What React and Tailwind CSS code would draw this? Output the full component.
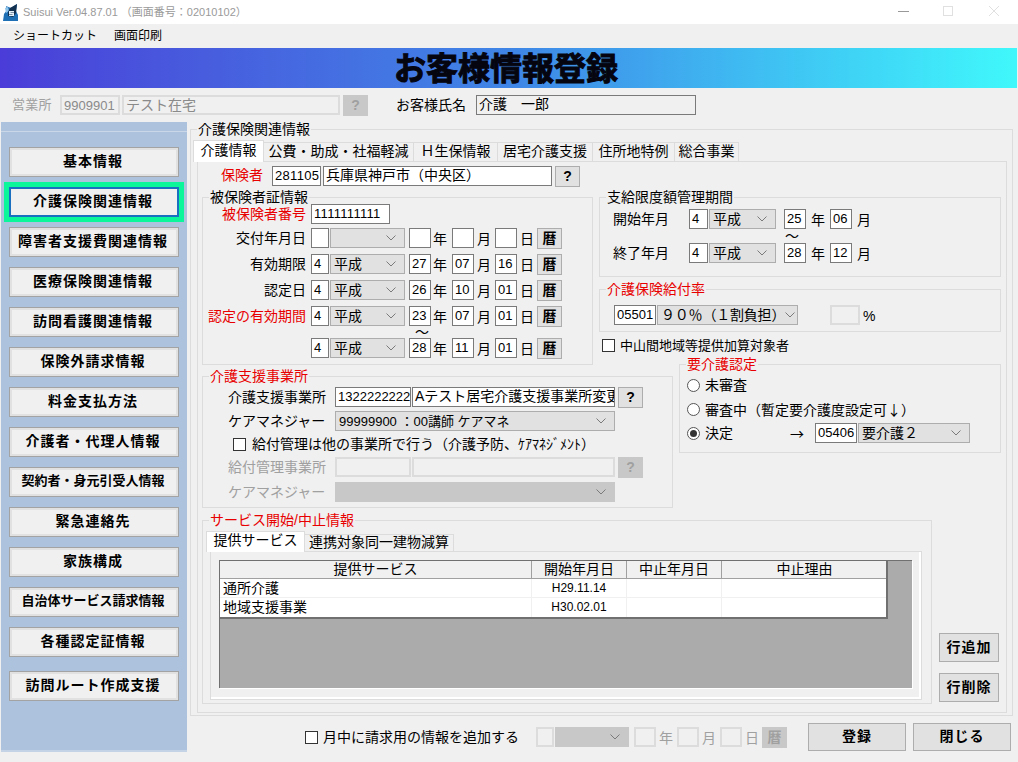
import React from 'react';

const fieldBorder = 'border border-[#7a7a7a]';

const Chevron = () => (
  <svg width="10" height="6" viewBox="0 0 10 6" fill="none" stroke="#7a7a7a" strokeWidth="1" className="shrink-0">
    <path d="M0.5 0.5 L5 5 L9.5 0.5" />
  </svg>
);

// text box, off = disabled look
const Box = ({ className = '', num, off, children }) => (
  <div className={`h-[20px] shrink-0 overflow-hidden whitespace-nowrap pl-[2px] leading-[17px] ${num ? 'text-[13px]' : 'text-[14px]'} ${off ? 'border-2 border-[#dcdcdc] bg-[#f0f0f0]' : `${fieldBorder} bg-white`} ${className}`}>
    {children}
  </div>
);

const Select = ({ className = '', off, children }) => (
  <div className={`flex h-[20px] shrink-0 items-center justify-between overflow-hidden whitespace-nowrap pl-[3px] pr-[8px] text-[14px] border ${off ? 'border-[#c8c8c8] bg-[#c8c8c8]' : 'border-[#adadad] bg-[#e1e1e1]'} ${className}`}>
    <span>{children}</span>
    <Chevron />
  </div>
);

const Btn = ({ className = '', off, children }) => (
  <div className={`flex shrink-0 items-center justify-center font-bold border ${off ? 'border-[#c8c8c8] bg-[#c8c8c8] text-[#a0a0a0]' : 'border-[#adadad] bg-[#e1e1e1]'} ${className}`}>
    {children}
  </div>
);

const Unit = ({ className = '', children }) => (
  <span className={`w-[14px] shrink-0 pt-[3px] text-[14px] leading-[17px] ${className}`}>{children}</span>
);

const Check = ({ className = '' }) => <span className={`h-[13px] w-[13px] shrink-0 border border-[#333333] bg-white ${className}`} />;

const Radio = ({ checked }) => (
  <span className="flex h-[13px] w-[13px] shrink-0 items-center justify-center rounded-full border border-[#555555] bg-white">
    {checked && <span className="h-[7px] w-[7px] rounded-full bg-[#333333]" />}
  </span>
);

const Group = ({ title, red, className = '', children }) => (
  <div className={`relative border border-[#dcdcdc] ${className}`}>
    <span className={`absolute left-[6px] top-[-9px] bg-[#f0f0f0] px-px text-[14px] leading-[17px] ${red ? 'text-[#e80000]' : ''}`}>{title}</span>
    {children}
  </div>
);

const DateRow = ({ label, red, className = '', v }) => (
  <div className={`flex h-[20px] items-center ${className}`}>
    <span className={`w-[104px] shrink-0 whitespace-nowrap pr-px text-right text-[14px] ${red ? 'text-[#e80000]' : ''}`}>{label}</span>
    <Box num className="ml-[4px] w-[18px]">{v && v[0]}</Box>
    <Select className="ml-px w-[75px]">{v && v[1]}</Select>
    <Box num className="ml-[4px] w-[22px]">{v && v[2]}</Box>
    <Unit className="ml-[2px]">年</Unit>
    <Box num className="ml-[5px] w-[22px]">{v && v[3]}</Box>
    <Unit className="ml-[3px]">月</Unit>
    <Box num className="ml-[4px] w-[22px]">{v && v[4]}</Box>
    <Unit className="ml-[3px]">日</Unit>
    <Btn className="ml-[3px] h-[21px] w-[25px] text-[14px]">暦</Btn>
  </div>
);

const sideItems = [
  { t: '基本情報' },
  { t: '介護保険関連情報', active: true },
  { t: '障害者支援費関連情報' },
  { t: '医療保険関連情報' },
  { t: '訪問看護関連情報' },
  { t: '保険外請求情報' },
  { t: '料金支払方法' },
  { t: '介護者・代理人情報' },
  { t: '契約者・身元引受人情報', small: true },
  { t: '緊急連絡先' },
  { t: '家族構成' },
  { t: '自治体サービス請求情報', small: true },
  { t: '各種認定証情報' },
];

const SideButton = ({ t, active, small, className = '' }) => (
  <div className={`flex h-[30px] w-[170px] items-center justify-center whitespace-nowrap pb-[2px] pr-[2px] font-bold ${small ? 'text-[13px]' : 'text-[14px] tracking-[1px]'} ${active ? 'border-2 border-[#1a6fc0] bg-[#f0f0f0] outline-[5px] outline-[#0bf59b]' : 'border border-[#a3a3a3] bg-[#f0f0f0] shadow-[inset_0_0_0_2px_#e1e1e1]'} ${className}`}>
    {t}
  </div>
);

const tabs = [
  ['公費・助成・社福軽減', 'w-[150px]'],
  ['Ｈ生保情報', 'w-[84px]'],
  ['居宅介護支援', 'w-[95px]'],
  ['住所地特例', 'w-[82px]'],
  ['総合事業', 'w-[64px]'],
];

const services = [
  ['通所介護', 'H29.11.14'],
  ['地域支援事業', 'H30.02.01'],
];

const gridCols = 'grid grid-cols-[312px_95px_95px_165px]';

export default function App() {
  return (
    <div className="flex h-[762px] w-[1018px] flex-col overflow-hidden bg-[#f0f0f0] font-['Liberation_Sans','Noto_Sans_CJK_JP',sans-serif] text-[14px] text-black">
      {/* title bar */}
      <div className="flex h-[24px] shrink-0 items-center bg-white pl-[2px]">
        <svg width="17" height="18" viewBox="0 0 17 18">
          <path d="M1 18 L2 11 L5 7 L4 3 L9 5 L15 1 L14 8 L16 12 L16 18 Z" fill="#1f6fb5" />
          <path d="M3 5 L6 4 L7 8 L4 10 Z" fill="#8fc4ea" />
          <path d="M6 9 L8 5 L15 1 L14 10 L11 14 L6 13 Z" fill="#12304f" />
          <path d="M7 8 H12 V9.5 H8.5 V10 H12 V13 H7 V11.5 H10.5 V11 H7 Z" fill="#e4f0fa" />
        </svg>
        <span className="ml-[4px] whitespace-nowrap text-[11px] text-[#9a9a9a]">Suisui Ver.04.87.01 （画面番号：02010102）</span>
        <svg width="120" height="14" viewBox="0 0 120 14" className="ml-auto mr-[9px]" fill="none">
          <path d="M9 6.5 H20" stroke="#999999" />
          <rect x="54.5" y="1.5" width="9" height="9" stroke="#e0e0e0" />
          <path d="M100 1 L110 11 M110 1 L100 11" stroke="#e0e0e0" />
        </svg>
      </div>

      {/* menu */}
      <div className="flex h-[24px] shrink-0 items-center pl-[13px] text-[12px]">
        <span>ショートカット</span>
        <span className="ml-[17px]">画面印刷</span>
      </div>

      {/* banner */}
      <div className="flex h-[40px] w-[1017px] shrink-0 items-center justify-center bg-linear-to-r from-[#4a3cd8] via-[#3f85e6] to-[#40f8fb] pr-[5px] pt-px text-[32px] font-bold leading-none text-[#050510] [-webkit-text-stroke:1px_#050510]">
        お客様情報登録
      </div>

      {/* office / customer */}
      <div className="flex h-[34px] shrink-0 items-start pl-[12px] pt-[7px]">
        <span className="w-[40px] whitespace-nowrap text-[13px] leading-[20px] tracking-[0.3px] text-[#a0a0a0]">営業所</span>
        <Box num off className="ml-[8px] w-[60px] text-[#8a8a8a]">9909901</Box>
        <Box off className="ml-[2px] w-[218px] text-[#8a8a8a]">テスト在宅</Box>
        <Btn off className="ml-[3px] h-[21px] w-[25px] text-[14px]">?</Btn>
        <span className="ml-[28px] w-[68px] whitespace-nowrap leading-[20px]">お客様氏名</span>
        <div className="ml-[12px] h-[20px] w-[220px] border border-[#7a7a7a] pl-[2px] text-[14px] leading-[16px]">介護　一郎</div>
      </div>

      <div className="flex min-h-0 flex-1 items-start">
        {/* side menu */}
        <div className="ml-px flex h-[630px] w-[186px] shrink-0 flex-col items-center border-b-2 border-[#c4d3e6] bg-[#adc2dd]">
          <div className="h-[10px] w-full shrink-0 border-b border-[#c9d7e8]" />
          <div className="flex flex-col gap-[10px] pt-[15px]">
            {sideItems.map((s) => <SideButton key={s.t} {...s} />)}
          </div>
          <SideButton t="訪問ルート作成支援" className="mt-[14px]" />
        </div>

        <div className="ml-[3px] flex w-[823px] shrink-0 flex-col pt-[7px]">
          <Group title="介護保険関連情報" className="h-[587px]">
            {/* main tabs */}
            <div className="ml-[2px] mt-[10px] flex h-[21px] items-end text-[14px]">
              <div className="relative z-10 -mb-px flex h-[22px] w-[71px] items-center justify-center border border-b-0 border-[#dcdcdc] bg-white pb-[3px]">介護情報</div>
              {tabs.map(([t, w]) => (
                <div key={t} className={`flex h-[19px] items-center justify-center whitespace-nowrap border-r border-t border-[#dcdcdc] pb-px ${w}`}>{t}</div>
              ))}
            </div>

            <div className="ml-[6px] h-[552px] w-[810px] border border-[#dcdcdc] pl-[4px] pt-[4px]">
              {/* insurer */}
              <div className="flex h-[20px] items-start">
                <span className="w-[62px] pr-px text-right leading-[18px] text-[#e80000]">保険者</span>
                <Box num className="ml-[8px] w-[49px] tracking-[0.3px]">281105</Box>
                <Box className="ml-[2px] w-[229px]">兵庫県神戸市（中央区）</Box>
                <Btn className="ml-[3px] h-[21px] w-[25px]">?</Btn>
              </div>

              <div className="mt-[11px] grid grid-cols-[397px_80px_322px] grid-rows-[167px_12px_132px]">
                {/* insured card */}
                <Group title="被保険者証情報" className="col-start-1 row-span-2 row-start-1 h-[168px] w-[391px]">
                  <div className="mt-[6px] flex h-[20px] items-center">
                    <span className="w-[104px] shrink-0 pr-px text-right text-[#e80000]">被保険者番号</span>
                    <Box num className="ml-[4px] w-[79px] tracking-[0.3px]">1111111111</Box>
                  </div>
                  <DateRow label="交付年月日" className="mt-[4px]" />
                  <DateRow label="有効期限" className="mt-[6px]" v={['4', '平成', '27', '07', '16']} />
                  <DateRow label="認定日" className="mt-[6px]" v={['4', '平成', '26', '10', '01']} />
                  <DateRow label="認定の有効期間" red className="mt-[6px]" v={['4', '平成', '23', '07', '01']} />
                  <div className="flex h-[12px] items-center pl-[212px] text-[14px] leading-none">～</div>
                  <DateRow label="" v={['4', '平成', '28', '11', '01']} />
                </Group>

                {/* right stack */}
                <div className="col-span-2 col-start-2 row-start-1 flex flex-col">
                  <Group title="支給限度額管理期間" className="h-[80px] w-[402px]">
                    <div className="ml-[13px] mt-[11px] flex h-[20px] items-start">
                      <span className="w-[76px] leading-[20px]">開始年月</span>
                      <Box num className="w-[19px]">4</Box>
                      <Select className="ml-px w-[67px]">平成</Select>
                      <Box num className="ml-[8px] w-[22px]">25</Box>
                      <Unit className="ml-[5px]">年</Unit>
                      <Box num className="ml-[5px] w-[22px]">06</Box>
                      <Unit className="ml-[5px]">月</Unit>
                    </div>
                    <div className="flex h-[14px] items-center pl-[185px] leading-none">～</div>
                    <div className="ml-[13px] flex h-[20px] items-start">
                      <span className="w-[76px] leading-[20px]">終了年月</span>
                      <Box num className="w-[19px]">4</Box>
                      <Select className="ml-px w-[67px]">平成</Select>
                      <Box num className="ml-[8px] w-[22px]">28</Box>
                      <Unit className="ml-[5px]">年</Unit>
                      <Box num className="ml-[5px] w-[22px]">12</Box>
                      <Unit className="ml-[5px]">月</Unit>
                    </div>
                  </Group>
                  <Group title="介護保険給付率" red className="mt-[12px] h-[43px] w-[402px]">
                    <div className="ml-[14px] mt-[15px] flex h-[20px] items-start">
                      <Box num className="w-[42px]">05501</Box>
                      <Select className="ml-px w-[141px] !pr-[3px]"><span className="tracking-[-0.2px]">９０％（１割負担）</span></Select>
                      <Box off className="ml-[32px] w-[30px]" />
                      <span className="ml-[3px] pt-px leading-[20px]">%</span>
                    </div>
                  </Group>
                  <div className="ml-[3px] mt-[7px] flex h-[13px] items-center">
                    <Check />
                    <span className="ml-[5px] whitespace-nowrap text-[13px]">中山間地域等提供加算対象者</span>
                  </div>
                </div>

                {/* care level */}
                <Group title="要介護認定" red className="col-start-3 row-span-2 row-start-2 h-[89px] w-[322px] self-start">
                  <div className="ml-[7px] mt-[10px] flex h-[20px] items-center">
                    <Radio />
                    <span className="ml-[5px]">未審査</span>
                  </div>
                  <div className="ml-[7px] mt-[4px] flex h-[20px] items-center">
                    <Radio />
                    <span className="ml-[5px] whitespace-nowrap font-['Noto_Sans_CJK_JP',sans-serif]">審査中（暫定要介護度設定可↓）</span>
                  </div>
                  <div className="ml-[7px] mt-[4px] flex h-[20px] items-center">
                    <Radio checked />
                    <span className="ml-[5px] w-[85px]">決定</span>
                    <span className="w-[14px] font-['Noto_Sans_CJK_JP',sans-serif]">→</span>
                    <Box num className="ml-[11px] w-[42px]">05406</Box>
                    <Select className="ml-px w-[112px]">要介護２</Select>
                  </div>
                </Group>

                {/* care office */}
                <Group title="介護支援事業所" red className="col-span-2 col-start-1 row-start-3 h-[132px] w-[471px]">
                  <div className="ml-[25px] mt-[10px] flex h-[20px] items-start">
                    <span className="w-[107px] leading-[20px]">介護支援事業所</span>
                    <Box num className="w-[76px]">1322222222</Box>
                    <Box className="ml-px w-[203px]">Aテスト居宅介護支援事業所変更</Box>
                    <Btn className="ml-[3px] h-[21px] w-[25px]">?</Btn>
                  </div>
                  <div className="ml-[25px] mt-[4px] flex h-[20px] items-center">
                    <span className="w-[107px] whitespace-nowrap">ケアマネジャー</span>
                    <Select className="w-[280px]"><span className="text-[13px]">99999900 ：00講師 ケアマネ</span></Select>
                  </div>
                  <div className="ml-[30px] mt-[3px] flex h-[20px] items-center">
                    <Check />
                    <span className="ml-[6px] whitespace-nowrap">給付管理は他の事業所で行う（介護予防、ｹｱﾏﾈｼﾞﾒﾝﾄ）</span>
                  </div>
                  <div className="ml-[25px] mt-[3px] flex h-[20px] items-start text-[#a0a0a0]">
                    <span className="w-[107px] leading-[20px]">給付管理事業所</span>
                    <Box off className="w-[76px]" />
                    <Box off className="ml-px w-[203px]" />
                    <Btn off className="ml-[3px] h-[21px] w-[25px]">?</Btn>
                  </div>
                  <div className="ml-[25px] mt-[5px] flex h-[20px] items-center text-[#a0a0a0]">
                    <span className="w-[107px] whitespace-nowrap">ケアマネジャー</span>
                    <Select off className="w-[280px]" />
                  </div>
                </Group>
              </div>

              {/* service */}
              <div className="mt-[12px] flex items-end">
                <Group title="サービス開始/中止情報" red className="h-[184px] w-[730px] shrink-0">
                  <div className="ml-[3px] mt-[10px] flex h-[20px] items-end">
                    <div className="relative z-10 -mb-px flex h-[21px] w-[99px] items-center justify-center border border-b-0 border-[#dcdcdc] bg-white pb-[3px]">提供サービス</div>
                    <div className="flex h-[17px] w-[149px] items-center justify-center whitespace-nowrap border-r border-t border-[#dcdcdc] pb-px">連携対象同一建物減算</div>
                  </div>
                  <div className="ml-[7px] h-[149px] w-[712px] border border-[#dcdcdc] pl-[8px] pt-[8px] shadow-[inset_-2px_-2px_0_#ffffff]">
                    <div className="h-[128px] w-[693px] border-l border-t border-[#707070] bg-[#ababab] shadow-[1px_1px_0_#ffffff]">
                      <div className="w-[668px] border-b-2 border-r-2 border-[#707070] bg-white text-[13px]">
                        <div className={`${gridCols} h-[18px] border-b border-[#a0a0a0] bg-[#f0f0f0]`}>
                          {['提供サービス', '開始年月日', '中止年月日', '中止理由'].map((h, i) => (
                            <span key={h} className={`text-center text-[14px] leading-[17px] ${i < 3 ? 'border-r border-[#a0a0a0]' : ''}`}>{h}</span>
                          ))}
                        </div>
                        {services.map(([name, from], r) => (
                          <div key={name} className={`${gridCols} h-[19px] ${r === 0 ? 'border-b border-[#f0f0f0]' : ''}`}>
                            <span className="border-r border-[#f0f0f0] pl-[3px] text-[14px] leading-[18px]">{name}</span>
                            <span className="border-r border-[#f0f0f0] text-center text-[12px] leading-[18px]">{from}</span>
                            <span className="border-r border-[#f0f0f0]" />
                            <span />
                          </div>
                        ))}
                      </div>
                    </div>
                  </div>
                </Group>
                <div className="mb-[2px] ml-[7px] flex flex-col gap-[11px]">
                  <Btn className="h-[29px] w-[60px] tracking-[1px]">行追加</Btn>
                  <Btn className="h-[29px] w-[60px] tracking-[1px]">行削除</Btn>
                </div>
              </div>
            </div>
          </Group>

          {/* bottom */}
          <div className="mt-[7px] flex h-[28px] items-center">
            <Check className="ml-[115px]" />
            <span className="ml-[5px] w-[196px] whitespace-nowrap">月中に請求用の情報を追加する</span>
            <Box off className="ml-[17px] w-[18px]" />
            <Select off className="ml-px w-[74px]" />
            <Box off className="ml-[5px] w-[22px]" />
            <Unit className="ml-[3px] text-[#a0a0a0]">年</Unit>
            <Box off className="ml-[4px] w-[22px]" />
            <Unit className="ml-[3px] text-[#a0a0a0]">月</Unit>
            <Box off className="ml-[4px] w-[22px]" />
            <Unit className="ml-[3px] text-[#a0a0a0]">日</Unit>
            <Btn off className="ml-[3px] h-[21px] w-[25px]">暦</Btn>
            <Btn className="ml-[21px] h-[28px] w-[98px] pb-px tracking-[1px]">登録</Btn>
            <Btn className="ml-[7px] h-[28px] w-[98px] pb-px tracking-[1px]">閉じる</Btn>
          </div>
        </div>
      </div>
    </div>
  );
}
